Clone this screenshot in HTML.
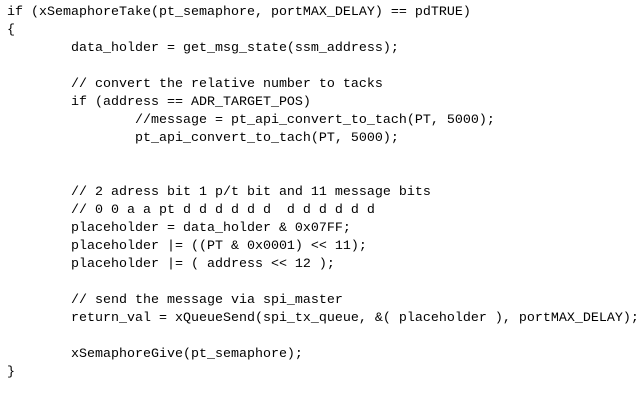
<!DOCTYPE html>
<html><head><meta charset="utf-8"><style>
html,body{margin:0;padding:0;background:#fff;width:643px;height:401px;overflow:hidden}
pre{margin:0;position:absolute;left:7px;top:4px;font-family:"Liberation Mono",monospace;font-size:13.33px;line-height:18px;color:#000;white-space:pre}
</style></head><body>
<pre>if (xSemaphoreTake(pt_semaphore, portMAX_DELAY) == pdTRUE)
{
        data_holder = get_msg_state(ssm_address);

        // convert the relative number to tacks
        if (address == ADR_TARGET_POS)
                //message = pt_api_convert_to_tach(PT, 5000);
                pt_api_convert_to_tach(PT, 5000);


        // 2 adress bit 1 p/t bit and 11 message bits
        // 0 0 a a pt d d d d d d  d d d d d d
        placeholder = data_holder &amp; 0x07FF;
        placeholder |= ((PT &amp; 0x0001) &lt;&lt; 11);
        placeholder |= ( address &lt;&lt; 12 );

        // send the message via spi_master
        return_val = xQueueSend(spi_tx_queue, &amp;( placeholder ), portMAX_DELAY);

        xSemaphoreGive(pt_semaphore);
}</pre>
</body></html>
